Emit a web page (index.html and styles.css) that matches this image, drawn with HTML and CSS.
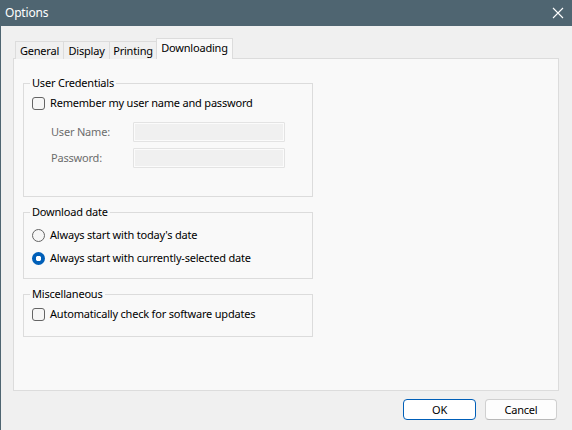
FILE: index.html
```html
<!DOCTYPE html>
<html>
<head>
<meta charset="utf-8">
<link rel="stylesheet" href="styles.css">
</head>
<body>
<div class="window">
  <div class="titlebar">
    <span class="title">Options</span>
    <svg class="close" width="12" height="12" viewBox="0 0 12 12"><path d="M1 1 L11 11 M11 1 L1 11" stroke="#ffffff" stroke-width="1.1" fill="none"/></svg>
  </div>
  <div class="content">
    <div class="tabs">
      <div class="tab w-general">General</div>
      <div class="tab w-display">Display</div>
      <div class="tab w-printing">Printing</div>
      <div class="tab active w-downloading">Downloading</div>
    </div>
    <div class="panel">
      <fieldset class="group g-cred">
        <legend>User Credentials</legend>
        <div class="row first">
          <span class="check"></span><span class="label">Remember my user name and password</span>
        </div>
        <div class="field-row f1">
          <span class="flabel">User Name:</span><span class="input"></span>
        </div>
        <div class="field-row f2">
          <span class="flabel">Password:</span><span class="input"></span>
        </div>
      </fieldset>
      <fieldset class="group g-date">
        <legend>Download date</legend>
        <div class="row r1">
          <span class="radio"></span><span class="label">Always start with today's date</span>
        </div>
        <div class="row r2">
          <span class="radio on"></span><span class="label">Always start with currently-selected date</span>
        </div>
      </fieldset>
      <fieldset class="group g-misc">
        <legend>Miscellaneous</legend>
        <div class="row first">
          <span class="check"></span><span class="label">Automatically check for software updates</span>
        </div>
      </fieldset>
    </div>
    <div class="buttons">
      <div class="btn default">OK</div>
      <div class="btn">Cancel</div>
    </div>
  </div>
</div>
</body>
</html>
```
FILE: styles.css
```css
* { box-sizing: border-box; }
html, body { margin: 0; padding: 0; }
body {
  width: 572px;
  height: 430px;
  overflow: hidden;
  font-family: "Noto Sans", "Liberation Sans", sans-serif;
  font-size: 11px;
  letter-spacing: -0.2px;
  color: #000;
  background: #f0f0f0;
}
.window {
  width: 572px;
  height: 430px;
  display: flex;
  flex-direction: column;
  background: #f0f0f0;
  border-left: 1px solid #4f6571;
}
.titlebar {
  height: 26px;
  flex: none;
  background: #4f6571;
  display: flex;
  align-items: center;
  justify-content: space-between;
  padding: 0 8px 0 5px;
  margin-left: -1px;
}
.title {
  color: #ffffff;
  font-size: 12px;
  line-height: 16px;
}
.close { display: block; }
.content {
  flex: 1;
  display: flex;
  flex-direction: column;
  padding: 12px 13px 0 12px;
}
.tabs {
  display: flex;
  align-items: flex-end;
  height: 21px;
  margin-left: 2px;
  position: relative;
  z-index: 1;
  margin-bottom: -1px;
}
.tab {
  height: 18px;
  border: 1px solid #dcdcdc;
  border-bottom: none;
  background: #f0f0f0;
  display: flex;
  align-items: center;
  justify-content: center;
  line-height: 16px;
  padding-top: 1px;
}
.tab + .tab { margin-left: -1px; }
.tab.active {
  height: 21px;
  background: #f9f9f9;
  padding-top: 0;
  padding-bottom: 2px;
}
.w-general { width: 49px; }
.w-display { width: 47px; }
.w-printing { width: 48px; }
.w-downloading { width: 77px; }
.panel {
  height: 333px;
  flex: none;
  border: 1px solid #dcdcdc;
  background: #f9f9f9;
  padding: 16px 0 0 9px;
}
.group {
  width: 290px;
  margin: 0;
  padding: 0 8px;
  border: 1px solid #dcdcdc;
  min-width: 0;
}
.group + .group { margin-top: 7px; }
.group legend {
  padding: 0 2px;
  margin-left: -2px;
  line-height: 16px;
}
.row {
  display: flex;
  align-items: center;
  height: 20px;
}
.g-cred { padding-bottom: 28px; }
.g-cred .first { margin-top: 2px; }
.g-date { padding-bottom: 10px; }
.g-date .r1 { margin-top: 5px; }
.g-date .r2 { margin-top: 3px; }
.g-misc { padding-bottom: 12px; }
.g-misc .first { margin-top: 2px; }
.label { margin-left: 5px; line-height: 16px; }
.check {
  width: 13px;
  height: 13px;
  border: 1px solid #646464;
  border-radius: 3px;
  background: #f6f6f6;
  flex: none;
}
.radio {
  width: 13px;
  height: 13px;
  border: 1px solid #646464;
  border-radius: 50%;
  background: #f6f6f6;
  flex: none;
}
.radio.on {
  border: none;
  background: radial-gradient(circle, #ffffff 0 2.6px, #005fb8 3px);
}
.field-row {
  display: flex;
  align-items: center;
  height: 20px;
  margin-left: 19px;
}
.f1 { margin-top: 9px; }
.f2 { margin-top: 6px; }
.flabel {
  width: 82px;
  color: #6d6d6d;
  line-height: 16px;
}
.input {
  width: 152px;
  height: 20px;
  border: 1px solid #e3e3e3;
  background: #f0f0f0;
  box-shadow: inset 0 0 0 1px #fbfbfb;
  border-radius: 1px;
}
.buttons {
  display: flex;
  justify-content: flex-end;
  gap: 9px;
  margin-top: 8px;
  margin-right: 2px;
}
.btn {
  width: 72px;
  height: 21px;
  border: 1px solid #d0d0d0;
  border-bottom-color: #b8b8b8;
  border-radius: 4px;
  background: #fdfdfd;
  display: flex;
  align-items: center;
  justify-content: center;
  line-height: 16px;
}
.btn.default {
  width: 73px;
  border: 1px solid #005fb8;
  background: #ffffff;
}
```
